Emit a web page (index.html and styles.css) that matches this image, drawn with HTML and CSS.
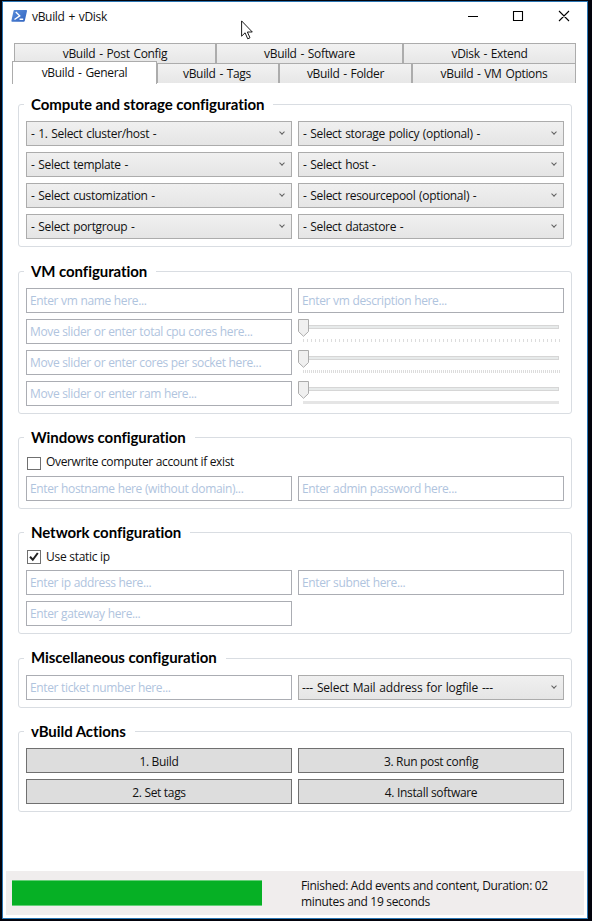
FILE: index.html
```html
<!DOCTYPE html>
<html lang="en">
<head>
<meta charset="utf-8">
<title>vBuild + vDisk</title>
<link rel="stylesheet" href="styles.css">
</head>
<body>
<div class="window">
  <header class="titlebar">
    <svg class="app-icon" width="17" height="14" viewBox="0 0 17 14"><defs><linearGradient id="shell" x1="0" y1="0" x2="1" y2="1"><stop offset="0" stop-color="#5c8fdb"/><stop offset="1" stop-color="#2f62bf"/></linearGradient></defs><path d="M3.4 1h11.8q1 0 .8 1l-2.2 9.8q-.2 1-1.2 1H1.2q-1 0-.8-1L2.5 2q.2-1 .9-1z" fill="url(#shell)"/><path d="M4.8 3l3.9 3.8-5.2 3.7M8.6 10.3h3.6" fill="none" stroke="#fff" stroke-width="1.4"/></svg>
    <span class="title">vBuild + vDisk</span>
    <svg class="controls" width="104" height="12" viewBox="0 0 104 12" fill="none" stroke="#000" stroke-width="1.1"><path d="M1 6.5h10M46.5 1.5h9v9h-9zM92 1l10 10M102 1l-10 10"/></svg>
  </header>
  <nav class="tabs">
    <div class="tab-row back">
      <div class="tab post">vBuild - Post Config</div>
      <div class="tab software">vBuild - Software</div>
      <div class="tab extend">vDisk - Extend</div>
    </div>
    <div class="tab-row front">
      <div class="tab active">vBuild - General</div>
      <div class="tab tags">vBuild - Tags</div>
      <div class="tab folder">vBuild - Folder</div>
      <div class="tab options">vBuild - VM Options</div>
    </div>
  </nav>
  <main class="page">
    <section class="group compute">
      <h2>Compute and storage configuration</h2>
      <div class="fields">
        <div class="select"><span>- 1. Select cluster/host -</span><i class="chevron"></i></div>
        <div class="select"><span>- Select storage policy (optional) -</span><i class="chevron"></i></div>
        <div class="select"><span>- Select template -</span><i class="chevron"></i></div>
        <div class="select"><span>- Select host -</span><i class="chevron"></i></div>
        <div class="select"><span>- Select customization -</span><i class="chevron"></i></div>
        <div class="select"><span>- Select resourcepool (optional) -</span><i class="chevron"></i></div>
        <div class="select"><span>- Select portgroup -</span><i class="chevron"></i></div>
        <div class="select"><span>- Select datastore -</span><i class="chevron"></i></div>
      </div>
    </section>
    <section class="group vm">
      <h2>VM configuration</h2>
      <div class="fields">
        <div class="input"><span>Enter vm name here...</span></div>
        <div class="input"><span>Enter vm description here...</span></div>
        <div class="input"><span>Move slider or enter total cpu cores here...</span></div>
        <div class="slider"><div class="track"></div><div class="ticks wide"></div><svg class="thumb" width="11" height="18" viewBox="0 0 11 18"><path d="M.5.5h10v12L5.5 17.3.5 12.5z" fill="#f0f0f0" stroke="#acacac"/></svg></div>
        <div class="input"><span>Move slider or enter cores per socket here...</span></div>
        <div class="slider"><div class="track"></div><div class="ticks narrow"></div><svg class="thumb" width="11" height="18" viewBox="0 0 11 18"><path d="M.5.5h10v12L5.5 17.3.5 12.5z" fill="#f0f0f0" stroke="#acacac"/></svg></div>
        <div class="input"><span>Move slider or enter ram here...</span></div>
        <div class="slider"><div class="track"></div><div class="ticks solid"></div><svg class="thumb" width="11" height="18" viewBox="0 0 11 18"><path d="M.5.5h10v12L5.5 17.3.5 12.5z" fill="#f0f0f0" stroke="#acacac"/></svg></div>
      </div>
    </section>
    <section class="group windows">
      <h2>Windows configuration</h2>
      <div class="check"><span class="box"></span><span>Overwrite computer account if exist</span></div>
      <div class="fields">
        <div class="input"><span>Enter hostname here (without domain)...</span></div>
        <div class="input"><span>Enter admin password here...</span></div>
      </div>
    </section>
    <section class="group network">
      <h2>Network configuration</h2>
      <div class="check"><span class="box"><svg width="12" height="12" viewBox="0 0 12 12"><path d="M2 5.8l2.8 3L9.8 2" fill="none" stroke="#212121" stroke-width="2"/></svg></span><span>Use static ip</span></div>
      <div class="fields">
        <div class="input"><span>Enter ip address here...</span></div>
        <div class="input"><span>Enter subnet here...</span></div>
        <div class="input"><span>Enter gateway here...</span></div>
      </div>
    </section>
    <section class="group misc">
      <h2>Miscellaneous configuration</h2>
      <div class="fields">
        <div class="input"><span>Enter ticket number here...</span></div>
        <div class="select mail"><span>--- Select Mail address for logfile ---</span><i class="chevron"></i></div>
      </div>
    </section>
    <section class="group actions">
      <h2>vBuild Actions</h2>
      <div class="fields">
        <div class="button">1. Build</div>
        <div class="button">3. Run post config</div>
        <div class="button">2. Set tags</div>
        <div class="button">4. Install software</div>
      </div>
    </section>
  </main>
  <footer class="status">
    <div class="progress"></div>
    <p>Finished: Add events and content, Duration: 02<br>minutes and 19 seconds</p>
  </footer>
</div>
<svg class="cursor" width="13" height="20" viewBox="0 0 13 20"><path d="M.6.9v15.3l3.5-3.4 2.6 6 2.3-1-2.6-5.8h4.9z" fill="#fff" stroke="#000" stroke-width=".9"/></svg>
</body>
</html>
```
FILE: styles.css
```css
* { box-sizing: border-box; }
body {
  margin: 0;
  padding: 1px 4px 2px 2px;
  height: 921px;
  overflow: hidden;
  background: #02030c;
  font: 12px/16px "Open Sans", "Noto Sans", sans-serif;
  letter-spacing: -0.32px;
  color: #111;
}
.window {
  height: 918px;
  background: #fff;
  border: 1px solid #2a75b3;
  display: flex;
  flex-direction: column;
}
.titlebar {
  height: 41px;
  flex: none;
  display: flex;
  align-items: flex-start;
  padding: 7px 16px 0 8px;
}
.app-icon { margin-top: 0; flex: none; }
.title { margin: 0 auto 0 4px; word-spacing: 1px; }
.controls { margin-top: 1px; flex: none; }
.tabs { flex: none; height: 41px; padding: 0 11px 0 9px; word-spacing: 1px; }
.tab-row { display: flex; height: 20px; }
.back { padding-left: 2px; }
.tab {
  height: 20px;
  line-height: 20px;
  text-align: center;
  background: linear-gradient(#f2f2f2, #e7e7e7);
  border: 1px solid #acacac;
  border-bottom: 0;
}
.post { width: 202px; }
.software { width: 187px; }
.extend { width: 173px; }
.active {
  position: relative;
  width: 145px;
  height: 23px;
  line-height: 22px;
  margin-top: -2px;
  background: #fff;
}
.tags { width: 122px; padding-right: 2px; }
.folder { width: 133px; }
.options { width: 164px; }
.page { flex: none; height: 787px; padding: 20px 15px 0; }
.group {
  border: 1px solid #d9dde2;
  border-radius: 3px;
  padding: 0 7px;
}
.compute, .vm { height: 143px; margin-bottom: 24px; }
.vm { margin-bottom: 23px; }
.windows { height: 72px; margin-bottom: 23px; }
.network { height: 102px; margin-bottom: 24px; }
.misc { height: 50px; margin-bottom: 23px; }
.actions { height: 81px; }
h2 {
  width: max-content;
  height: 22px;
  margin: -12px 0 6px -2px;
  padding: 0 9px 0 7px;
  background: #fff;
  font: bold 15px/22px Lato, sans-serif;
  letter-spacing: -0.07px;
  color: #000;
}
.misc h2 { line-height: 20px; }
.fields {
  display: grid;
  grid-template-columns: 266px 266px;
  grid-auto-rows: 25px;
  gap: 6px;
}
.select, .input {
  display: flex;
  align-items: center;
  justify-content: space-between;
  border: 1px solid #acacac;
  padding: 0 6px 0 4px;
  white-space: nowrap;
}
.select {
  background: linear-gradient(#f0f0f0, #e5e5e5);
  word-spacing: 0.9px;
}
.mail { letter-spacing: -0.2px; word-spacing: 1px; padding-left: 3px; }
.input {
  border-color: #abadb3;
  color: #b0c4de;
  padding-left: 3px;
  letter-spacing: -0.36px;
  word-spacing: 0.2px;
}
.chevron {
  width: 4px;
  height: 4px;
  margin: -4px 1px 0 0;
  border: solid #606060;
  border-width: 0 1px 1px 0;
  transform: rotate(45deg);
}
.slider { position: relative; padding-top: 6px; }
.track {
  width: 261px;
  height: 4px;
  background: #e7eaea;
  border: 1px solid #d6d6d6;
}
.ticks { width: 257px; height: 3px; margin: 10px 0 0 5px; }
.wide { background: repeating-linear-gradient(90deg, #dcdcdc 0 1px, transparent 1px 4px); }
.narrow { background: repeating-linear-gradient(90deg, #dcdcdc 0 1px, transparent 1px 2px); }
.solid { background: #e5e5e5; width: 256px; }
.thumb { position: absolute; left: 0; top: 0; }
.check { display: flex; align-items: center; height: 18px; margin: 0 0 4px 1px; gap: 5px; letter-spacing: -0.34px; }
.check span:last-child { margin-top: -2px; }
.box { width: 14px; height: 14px; border: 1px solid #707070; background: #fff; }
.windows .box { height: 13px; }
.box svg { display: block; }
.network .check { height: 16px; margin-bottom: 5px; letter-spacing: -0.28px; }
.network .check span:last-child { margin-top: 0; }
.button {
  line-height: 25px;
  height: 25px;
  border: 1px solid #707070;
  background: #ddd;
  text-align: center;
}
.status {
  display: flex;
  flex: none;
  height: 44px;
  margin: 0 3px;
  padding: 9px 6px 0;
  background: #f0eded;
}
.progress {
  width: 250px;
  height: 26px;
  background: #06b025;
  border: solid #65cf78;
  border-width: 1px 0;
}
.status p { margin: -2px 0 0 39px; white-space: nowrap; }
.cursor { position: absolute; left: 241px; top: 20px; }
```
